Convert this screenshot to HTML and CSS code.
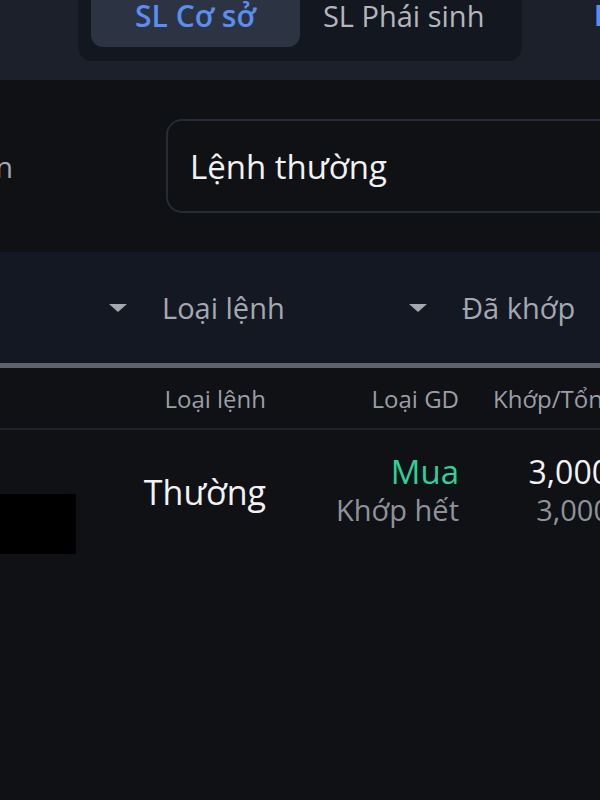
FILE: index.html
```html
<!DOCTYPE html>
<html lang="vi">
<head>
    <meta charset="UTF-8">
    <title>Sổ lệnh</title>
    <link rel="stylesheet" href="styles.css">
</head>
<body>
    <div class="top-bar">
        <div class="seg">
            <div class="seg-tab active">SL Cơ sở</div>
            <div class="seg-tab">SL Phái sinh</div>
        </div>
        <div class="top-link">I</div>
    </div>

    <div class="order-type">
        <span class="field-label">Điều kiện</span>
        <div class="select-box">Lệnh thường</div>
    </div>

    <div class="filters">
        <div class="filter"><span>Mã CK</span><span class="caret"></span></div>
        <div class="filter"><span>Loại lệnh</span><span class="caret"></span></div>
        <div class="filter"><span>Đã khớp</span><span class="caret"></span></div>
    </div>

    <div class="progress-line"></div>

    <div class="table-head">
        <div class="cell">Mã CK</div>
        <div class="cell">Loại lệnh</div>
        <div class="cell">Loại GD</div>
        <div class="cell">Khớp/Tổng</div>
    </div>

    <div class="table-row">
        <div class="cell"><div class="redact"></div></div>
        <div class="cell main">Thường</div>
        <div class="cell">
            <div class="buy">Mua</div>
            <div class="sub">Khớp hết</div>
        </div>
        <div class="cell">
            <div class="main">3,000</div>
            <div class="sub">3,000</div>
        </div>
    </div>
</body>
</html>
```

FILE: styles.css
```css
body {
    margin: 0;
    width: 600px;
    height: 800px;
    overflow: hidden;
    background-color: #0f1115;
    color: #f2f2f2;
    font-family: 'Open Sans', 'Lato', sans-serif;
}

/* top segmented control */
.top-bar {
    height: 80px;
    background-color: #1c202b;
    display: flex;
    align-items: flex-start;
    overflow: hidden;
}

.seg {
    flex: none;
    margin-left: 78px;
    margin-top: -30px;
    width: 444px;
    height: 91px;
    box-sizing: border-box;
    padding: 13px;
    padding-bottom: 14px;
    background-color: #131720;
    border-radius: 14px;
    display: flex;
}

.seg-tab {
    width: 210px;
    font-size: 29px;
    color: #b3b6bc;
    display: flex;
    align-items: center;
    padding-left: 23px;
    box-sizing: border-box;
    white-space: nowrap;
}

.seg-tab.active {
    justify-content: center;
    padding-left: 0;
    background-color: #2c3343;
    border-radius: 12px;
    color: #5b8ef0;
    font-size: 30px;
    font-weight: 600;
}

.top-link {
    flex: none;
    margin-left: 72px;
    margin-top: -4px;
    font-size: 28px;
    font-weight: bold;
    color: #5b8ef0;
}

/* order type select */
.order-type {
    height: 172px;
    display: flex;
    align-items: center;
}

.field-label {
    flex: none;
    width: 160px;
    margin-left: -147px;
    margin-right: 153px;
    text-align: right;
    font-size: 29px;
    color: #a4a8b0;
}

.select-box {
    flex: none;
    width: 500px;
    height: 94px;
    box-sizing: border-box;
    border: 2px solid #262b34;
    border-radius: 16px;
    padding-left: 22px;
    display: flex;
    align-items: center;
    font-size: 33px;
    color: #f2f2f2;
}

/* filters */
.filters {
    height: 111px;
    background-color: #131823;
    display: flex;
    align-items: center;
    margin-left: -138px;
    width: 900px;
}

.filter {
    flex: none;
    width: 300px;
    box-sizing: border-box;
    padding-right: 35px;
    display: flex;
    align-items: center;
    justify-content: space-between;
    font-size: 29px;
    color: #a4a8b0;
}

.caret {
    width: 0;
    height: 0;
    border-left: 9px solid transparent;
    border-right: 9px solid transparent;
    border-top: 8px solid #a4a8b0;
}

.progress-line {
    height: 5px;
    background-color: #5d636c;
}

/* table */
.table-head, .table-row {
    display: grid;
    grid-template-columns: 76px 190px 193px 151px;
}

.table-head {
    height: 60px;
    align-items: center;
    border-bottom: 2px solid #1f2329;
    font-size: 24px;
    color: #9a9ea6;
}

.cell {
    text-align: right;
    white-space: nowrap;
}

.table-head .cell:first-child {
    visibility: hidden;
}

.table-head .cell:last-child {
    text-align: left;
    padding-left: 34px;
}

.table-row {
    padding-top: 22px;
    align-items: start;
}

.table-row .main {
    font-size: 32px;
    line-height: 40px;
    color: #f2f2f2;
}

.table-row > .cell.main {
    margin-top: 20px;
    font-size: 34px;
}

.redact {
    width: 76px;
    height: 60px;
    margin-top: 42px;
    background-color: #000;
}

.buy {
    font-size: 33px;
    line-height: 40px;
    color: #2ecf98;
}

.sub {
    font-size: 29px;
    line-height: 36px;
    color: #8e929a;
}
```
